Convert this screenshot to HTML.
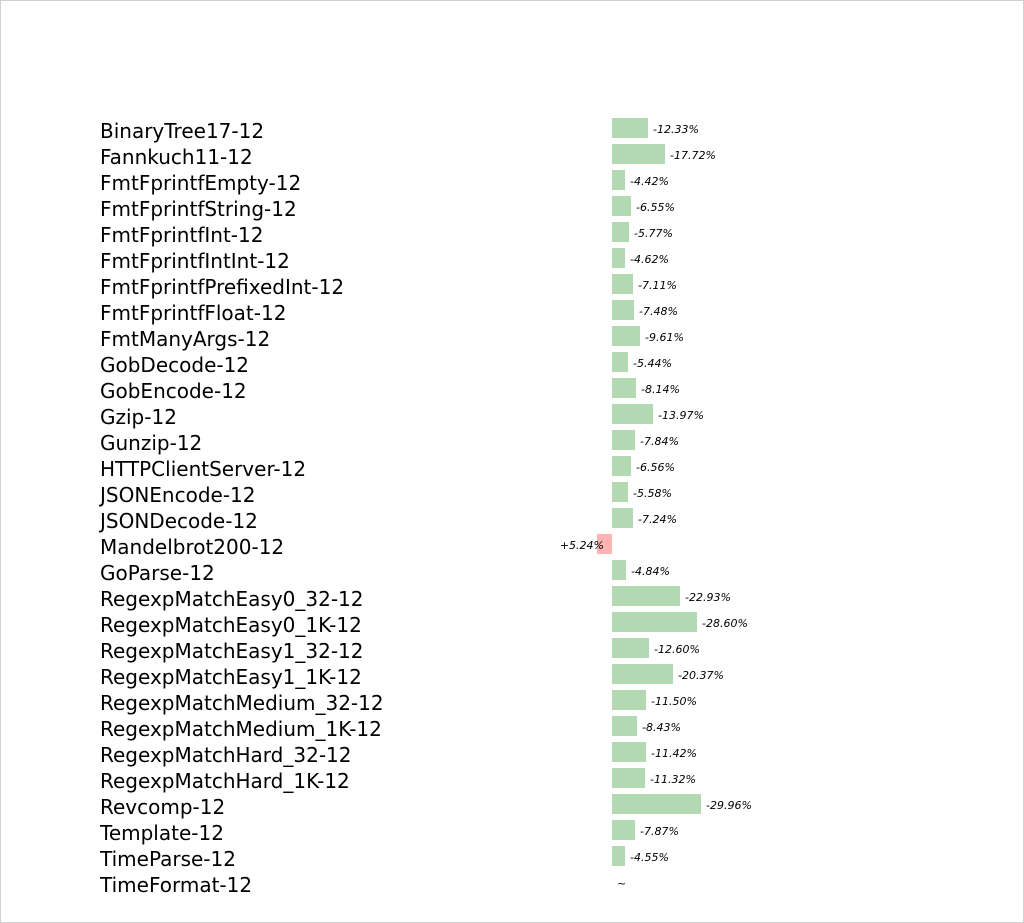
<!DOCTYPE html>
<html><head><meta charset="utf-8"><style>
html,body{margin:0;padding:0;background:#fff}
#c{position:relative;width:1022px;height:921px;border:1px solid #d0d0d0;overflow:hidden;font-family:"DejaVu Sans","Liberation Sans",sans-serif}
.r{position:absolute;left:0;width:1022px;height:26px}
.l{position:absolute;left:99px;top:0;font-size:20px;line-height:26px;color:#000;white-space:nowrap}
.b{position:absolute;left:611px;top:0;height:20px;background:#b3d9b3}
.p{position:absolute;top:2px;font-size:11px;line-height:20px;font-style:italic;color:#000;white-space:nowrap}
</style></head><body><div id="c">
<div class="r" style="top:117px"><div class="l">BinaryTree17-12</div><div class="b" style="width:36px"></div><div class="p" style="left:652px">-12.33%</div></div>
<div class="r" style="top:143px"><div class="l">Fannkuch11-12</div><div class="b" style="width:53px"></div><div class="p" style="left:669px">-17.72%</div></div>
<div class="r" style="top:169px"><div class="l">FmtFprintfEmpty-12</div><div class="b" style="width:13px"></div><div class="p" style="left:629px">-4.42%</div></div>
<div class="r" style="top:195px"><div class="l">FmtFprintfString-12</div><div class="b" style="width:19px"></div><div class="p" style="left:635px">-6.55%</div></div>
<div class="r" style="top:221px"><div class="l">FmtFprintfInt-12</div><div class="b" style="width:17px"></div><div class="p" style="left:633px">-5.77%</div></div>
<div class="r" style="top:247px"><div class="l">FmtFprintfIntInt-12</div><div class="b" style="width:13px"></div><div class="p" style="left:629px">-4.62%</div></div>
<div class="r" style="top:273px"><div class="l">FmtFprintfPrefixedInt-12</div><div class="b" style="width:21px"></div><div class="p" style="left:637px">-7.11%</div></div>
<div class="r" style="top:299px"><div class="l">FmtFprintfFloat-12</div><div class="b" style="width:22px"></div><div class="p" style="left:638px">-7.48%</div></div>
<div class="r" style="top:325px"><div class="l">FmtManyArgs-12</div><div class="b" style="width:28px"></div><div class="p" style="left:644px">-9.61%</div></div>
<div class="r" style="top:351px"><div class="l">GobDecode-12</div><div class="b" style="width:16px"></div><div class="p" style="left:632px">-5.44%</div></div>
<div class="r" style="top:377px"><div class="l">GobEncode-12</div><div class="b" style="width:24px"></div><div class="p" style="left:640px">-8.14%</div></div>
<div class="r" style="top:403px"><div class="l">Gzip-12</div><div class="b" style="width:41px"></div><div class="p" style="left:657px">-13.97%</div></div>
<div class="r" style="top:429px"><div class="l">Gunzip-12</div><div class="b" style="width:23px"></div><div class="p" style="left:639px">-7.84%</div></div>
<div class="r" style="top:455px"><div class="l">HTTPClientServer-12</div><div class="b" style="width:19px"></div><div class="p" style="left:635px">-6.56%</div></div>
<div class="r" style="top:481px"><div class="l">JSONEncode-12</div><div class="b" style="width:16px"></div><div class="p" style="left:632px">-5.58%</div></div>
<div class="r" style="top:507px"><div class="l">JSONDecode-12</div><div class="b" style="width:21px"></div><div class="p" style="left:637px">-7.24%</div></div>
<div class="r" style="top:533px"><div class="l">Mandelbrot200-12</div><div class="b" style="left:596px;width:15px;background:#ffb3b3"></div><div class="p" style="right:419px">+5.24%</div></div>
<div class="r" style="top:559px"><div class="l">GoParse-12</div><div class="b" style="width:14px"></div><div class="p" style="left:630px">-4.84%</div></div>
<div class="r" style="top:585px"><div class="l">RegexpMatchEasy0_32-12</div><div class="b" style="width:68px"></div><div class="p" style="left:684px">-22.93%</div></div>
<div class="r" style="top:611px"><div class="l">RegexpMatchEasy0_1K-12</div><div class="b" style="width:85px"></div><div class="p" style="left:701px">-28.60%</div></div>
<div class="r" style="top:637px"><div class="l">RegexpMatchEasy1_32-12</div><div class="b" style="width:37px"></div><div class="p" style="left:653px">-12.60%</div></div>
<div class="r" style="top:663px"><div class="l">RegexpMatchEasy1_1K-12</div><div class="b" style="width:61px"></div><div class="p" style="left:677px">-20.37%</div></div>
<div class="r" style="top:689px"><div class="l">RegexpMatchMedium_32-12</div><div class="b" style="width:34px"></div><div class="p" style="left:650px">-11.50%</div></div>
<div class="r" style="top:715px"><div class="l">RegexpMatchMedium_1K-12</div><div class="b" style="width:25px"></div><div class="p" style="left:641px">-8.43%</div></div>
<div class="r" style="top:741px"><div class="l">RegexpMatchHard_32-12</div><div class="b" style="width:34px"></div><div class="p" style="left:650px">-11.42%</div></div>
<div class="r" style="top:767px"><div class="l">RegexpMatchHard_1K-12</div><div class="b" style="width:33px"></div><div class="p" style="left:649px">-11.32%</div></div>
<div class="r" style="top:793px"><div class="l">Revcomp-12</div><div class="b" style="width:89px"></div><div class="p" style="left:705px">-29.96%</div></div>
<div class="r" style="top:819px"><div class="l">Template-12</div><div class="b" style="width:23px"></div><div class="p" style="left:639px">-7.87%</div></div>
<div class="r" style="top:845px"><div class="l">TimeParse-12</div><div class="b" style="width:13px"></div><div class="p" style="left:629px">-4.55%</div></div>
<div class="r" style="top:871px"><div class="l">TimeFormat-12</div><div class="p" style="left:616px">~</div></div>
</div></body></html>
